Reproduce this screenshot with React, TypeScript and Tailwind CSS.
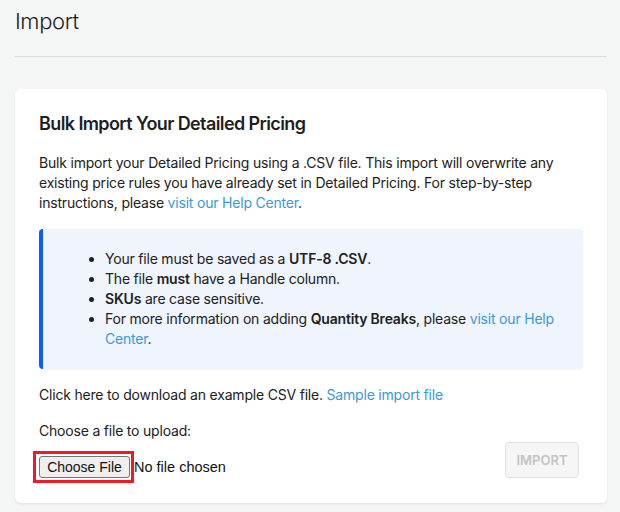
import React from "react";

export default function App() {
  const link = "text-[#3a9bd5]";
  return (
    <div className="min-h-[512px] bg-[#f4f6f6] pl-[15px] pr-[13px] pt-[7px] pb-[10px] font-['Inter',sans-serif] text-[#212121]">
      <h1 className="text-[22px] leading-[28px] font-light tracking-[-0.4px] text-[#1c1c1c]">Import</h1>
      <div className="mt-[21px] h-px bg-[#d9dcdc]" />
      <div className="mt-[32px] rounded-[6px] bg-white px-[24px] pt-[23px] pb-[25px] shadow-[0_1px_2px_rgba(0,0,0,0.08)]">
        <h2 className="text-[18px] leading-[24px] font-semibold tracking-[-0.6px] text-[#1f1f1f]">
          Bulk Import Your Detailed Pricing
        </h2>
        <div className="tracking-[-0.2px] text-[14px] leading-[20px]">
          <p className="mt-[17px]">
            Bulk import your Detailed Pricing using a .CSV file. This import will overwrite any
            existing price rules you have already set in Detailed Pricing. For step-by-step
            instructions, please <a className={link}>visit our Help Center</a>.
          </p>
          <div className="mt-[16px] rounded-[4px] border-l-[4px] border-[#0b5cff] bg-[#eff4fd] py-[20px] pl-[22px] pr-[14px] shadow-[0_1px_2px_rgba(0,0,0,0.06)]">
            <ul className="list-disc pl-[40px]">
              <li>
                Your file must be saved as a <b className="font-semibold">UTF-8 .CSV</b>.
              </li>
              <li>
                The file <b className="font-semibold">must</b> have a Handle column.
              </li>
              <li>
                <b className="font-semibold">SKUs</b> are case sensitive.
              </li>
              <li>
                For more information on adding <b className="font-semibold">Quantity Breaks</b>, please{" "}
                <a className={link}>visit our Help Center</a>.
              </li>
            </ul>
          </div>
          <p className="mt-[16px]">
            Click here to download an example CSV file. <a className={link}>Sample import file</a>
          </p>
          <div className="mt-[16px] flex items-end justify-between">
            <div>
              <p>Choose a file to upload:</p>
              <div className="mt-[15px] flex items-center font-['Liberation_Sans',Arial,sans-serif] tracking-normal text-[14px] text-[#111]">
                <span className="relative">
                  <span className="flex h-[22px] w-[91px] items-center justify-center rounded-[3px] border border-[#767676] bg-[#efefef] leading-none">
                    Choose File
                  </span>
                  <span className="pointer-events-none absolute -left-[6px] -right-[4px] -top-[5px] -bottom-[5px] border-[3px] border-[#ec1c24]" />
                </span>
                <span className="ml-[4px] text-[14.5px]">No file chosen</span>
              </div>
            </div>
            <button className="mr-[4px] h-[36px] w-[74px] rounded-[4px] border border-[#e1e1e1] bg-[#f6f6f6] text-[13px] font-semibold tracking-normal text-[#c4c4c4]">
              IMPORT
            </button>
          </div>
        </div>
      </div>
    </div>
  );
}
